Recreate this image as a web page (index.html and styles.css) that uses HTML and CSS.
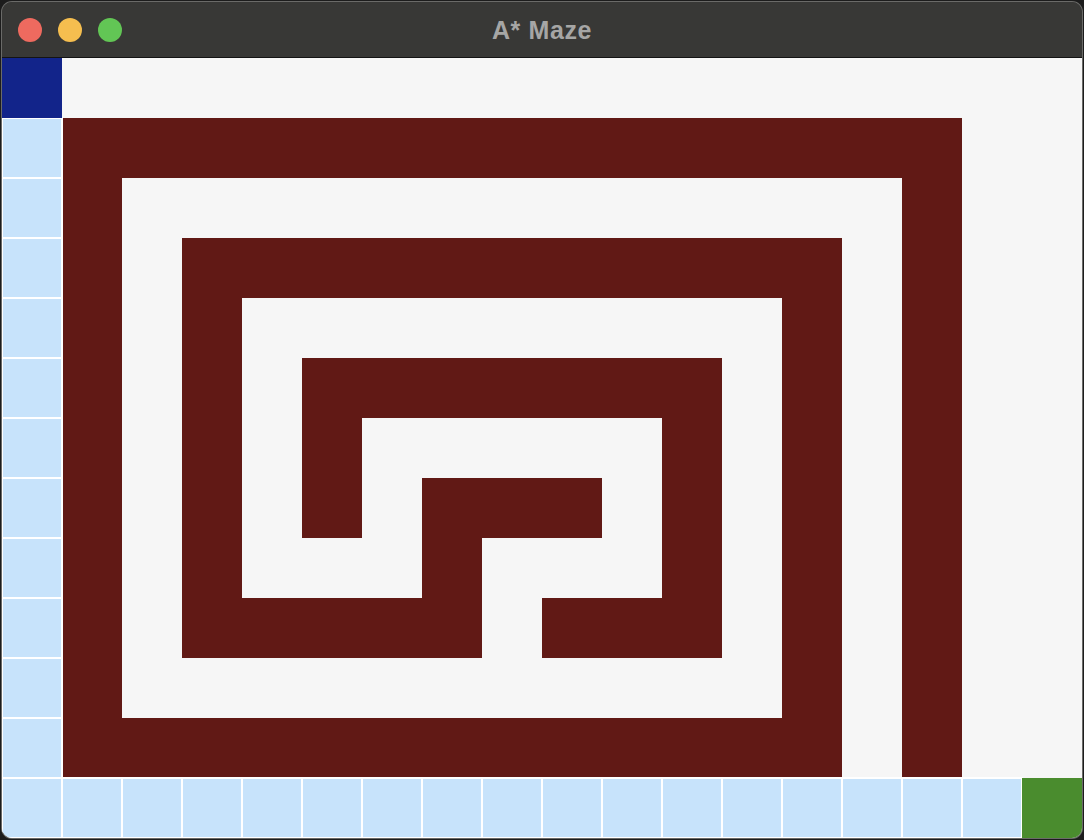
FILE: index.html
```html
<!DOCTYPE html>
<html lang="en">
<head>
<meta charset="utf-8">
<title>A* Maze</title>
<link rel="stylesheet" href="styles.css">
</head>
<body>
<div class="window">
  <div class="titlebar">
    <div class="lights">
      <span class="light red"></span>
      <span class="light yellow"></span>
      <span class="light green"></span>
    </div>
    <div class="title">A* Maze</div>
  </div>
  <div class="maze">
    <!-- row 0 -->
    <div class="c s"></div><div class="c g"></div><div class="c g"></div><div class="c g"></div><div class="c g"></div><div class="c g"></div><div class="c g"></div><div class="c g"></div><div class="c g"></div><div class="c g"></div><div class="c g"></div><div class="c g"></div><div class="c g"></div><div class="c g"></div><div class="c g"></div><div class="c g"></div><div class="c g"></div><div class="c g"></div>
    <!-- row 1 -->
    <div class="c p"></div><div class="c w"></div><div class="c w"></div><div class="c w"></div><div class="c w"></div><div class="c w"></div><div class="c w"></div><div class="c w"></div><div class="c w"></div><div class="c w"></div><div class="c w"></div><div class="c w"></div><div class="c w"></div><div class="c w"></div><div class="c w"></div><div class="c w"></div><div class="c g"></div><div class="c g"></div>
    <!-- row 2 -->
    <div class="c p"></div><div class="c w"></div><div class="c g"></div><div class="c g"></div><div class="c g"></div><div class="c g"></div><div class="c g"></div><div class="c g"></div><div class="c g"></div><div class="c g"></div><div class="c g"></div><div class="c g"></div><div class="c g"></div><div class="c g"></div><div class="c g"></div><div class="c w"></div><div class="c g"></div><div class="c g"></div>
    <!-- row 3 -->
    <div class="c p"></div><div class="c w"></div><div class="c g"></div><div class="c w"></div><div class="c w"></div><div class="c w"></div><div class="c w"></div><div class="c w"></div><div class="c w"></div><div class="c w"></div><div class="c w"></div><div class="c w"></div><div class="c w"></div><div class="c w"></div><div class="c g"></div><div class="c w"></div><div class="c g"></div><div class="c g"></div>
    <!-- row 4 -->
    <div class="c p"></div><div class="c w"></div><div class="c g"></div><div class="c w"></div><div class="c g"></div><div class="c g"></div><div class="c g"></div><div class="c g"></div><div class="c g"></div><div class="c g"></div><div class="c g"></div><div class="c g"></div><div class="c g"></div><div class="c w"></div><div class="c g"></div><div class="c w"></div><div class="c g"></div><div class="c g"></div>
    <!-- row 5 -->
    <div class="c p"></div><div class="c w"></div><div class="c g"></div><div class="c w"></div><div class="c g"></div><div class="c w"></div><div class="c w"></div><div class="c w"></div><div class="c w"></div><div class="c w"></div><div class="c w"></div><div class="c w"></div><div class="c g"></div><div class="c w"></div><div class="c g"></div><div class="c w"></div><div class="c g"></div><div class="c g"></div>
    <!-- row 6 -->
    <div class="c p"></div><div class="c w"></div><div class="c g"></div><div class="c w"></div><div class="c g"></div><div class="c w"></div><div class="c g"></div><div class="c g"></div><div class="c g"></div><div class="c g"></div><div class="c g"></div><div class="c w"></div><div class="c g"></div><div class="c w"></div><div class="c g"></div><div class="c w"></div><div class="c g"></div><div class="c g"></div>
    <!-- row 7 -->
    <div class="c p"></div><div class="c w"></div><div class="c g"></div><div class="c w"></div><div class="c g"></div><div class="c w"></div><div class="c g"></div><div class="c w"></div><div class="c w"></div><div class="c w"></div><div class="c g"></div><div class="c w"></div><div class="c g"></div><div class="c w"></div><div class="c g"></div><div class="c w"></div><div class="c g"></div><div class="c g"></div>
    <!-- row 8 -->
    <div class="c p"></div><div class="c w"></div><div class="c g"></div><div class="c w"></div><div class="c g"></div><div class="c g"></div><div class="c g"></div><div class="c w"></div><div class="c g"></div><div class="c g"></div><div class="c g"></div><div class="c w"></div><div class="c g"></div><div class="c w"></div><div class="c g"></div><div class="c w"></div><div class="c g"></div><div class="c g"></div>
    <!-- row 9 -->
    <div class="c p"></div><div class="c w"></div><div class="c g"></div><div class="c w"></div><div class="c w"></div><div class="c w"></div><div class="c w"></div><div class="c w"></div><div class="c g"></div><div class="c w"></div><div class="c w"></div><div class="c w"></div><div class="c g"></div><div class="c w"></div><div class="c g"></div><div class="c w"></div><div class="c g"></div><div class="c g"></div>
    <!-- row 10 -->
    <div class="c p"></div><div class="c w"></div><div class="c g"></div><div class="c g"></div><div class="c g"></div><div class="c g"></div><div class="c g"></div><div class="c g"></div><div class="c g"></div><div class="c g"></div><div class="c g"></div><div class="c g"></div><div class="c g"></div><div class="c w"></div><div class="c g"></div><div class="c w"></div><div class="c g"></div><div class="c g"></div>
    <!-- row 11 -->
    <div class="c p"></div><div class="c w"></div><div class="c w"></div><div class="c w"></div><div class="c w"></div><div class="c w"></div><div class="c w"></div><div class="c w"></div><div class="c w"></div><div class="c w"></div><div class="c w"></div><div class="c w"></div><div class="c w"></div><div class="c w"></div><div class="c g"></div><div class="c w"></div><div class="c g"></div><div class="c g"></div>
    <!-- row 12 -->
    <div class="c p"></div><div class="c p"></div><div class="c p"></div><div class="c p"></div><div class="c p"></div><div class="c p"></div><div class="c p"></div><div class="c p"></div><div class="c p"></div><div class="c p"></div><div class="c p"></div><div class="c p"></div><div class="c p"></div><div class="c p"></div><div class="c p"></div><div class="c p"></div><div class="c p"></div><div class="c e"></div>
  </div>
</div>
</body>
</html>
```

FILE: styles.css
```css
* { box-sizing: border-box; }

html, body {
  margin: 0;
  padding: 0;
  width: 1084px;
  height: 840px;
  overflow: hidden;
  background: #1c1c1c;
}

.window {
  width: 1080px;
  height: 836px;
  margin: 2px 2px 0 2px;
  border-radius: 10px;
  overflow: hidden;
  background: #383836;
  box-shadow: 0 0 0 1px #6a6a68;
  display: flex;
  flex-direction: column;
}

.titlebar {
  height: 56px;
  flex: 0 0 56px;
  background: #383836;
  border-bottom: 1px solid #141414;
  display: flex;
  align-items: center;
  justify-content: center;
  position: relative;
}

.lights {
  position: absolute;
  left: 16px;
  top: 16px;
  display: flex;
  gap: 16px;
}

.light {
  width: 24px;
  height: 24px;
  border-radius: 50%;
  display: block;
}
.light.red { background: #ee6a5f; }
.light.yellow { background: #f5be4f; }
.light.green { background: #62c655; }

.title {
  font-family: "Liberation Sans", Arial, sans-serif;
  font-weight: bold;
  font-size: 25px;
  letter-spacing: 0.6px;
  color: #a6a6a5;
  margin-top: 1px;
}

.maze {
  display: grid;
  grid-template-columns: repeat(18, 60px);
  grid-auto-rows: 60px;
  background: #f6f6f6;
}

.c { width: 60px; height: 60px; }
.g { background: #f6f6f6; }
.w { background: #611915; }
.p {
  background: #c7e3fb;
  position: relative;
  z-index: 1;
  box-shadow: 0 0 0 1px #ffffff, inset 0 0 0 1px #ffffff;
}
.s {
  background: #12248a;
  position: relative;
  z-index: 2;
}
.e {
  background: #4a8c2e;
  position: relative;
  z-index: 2;
}
```
